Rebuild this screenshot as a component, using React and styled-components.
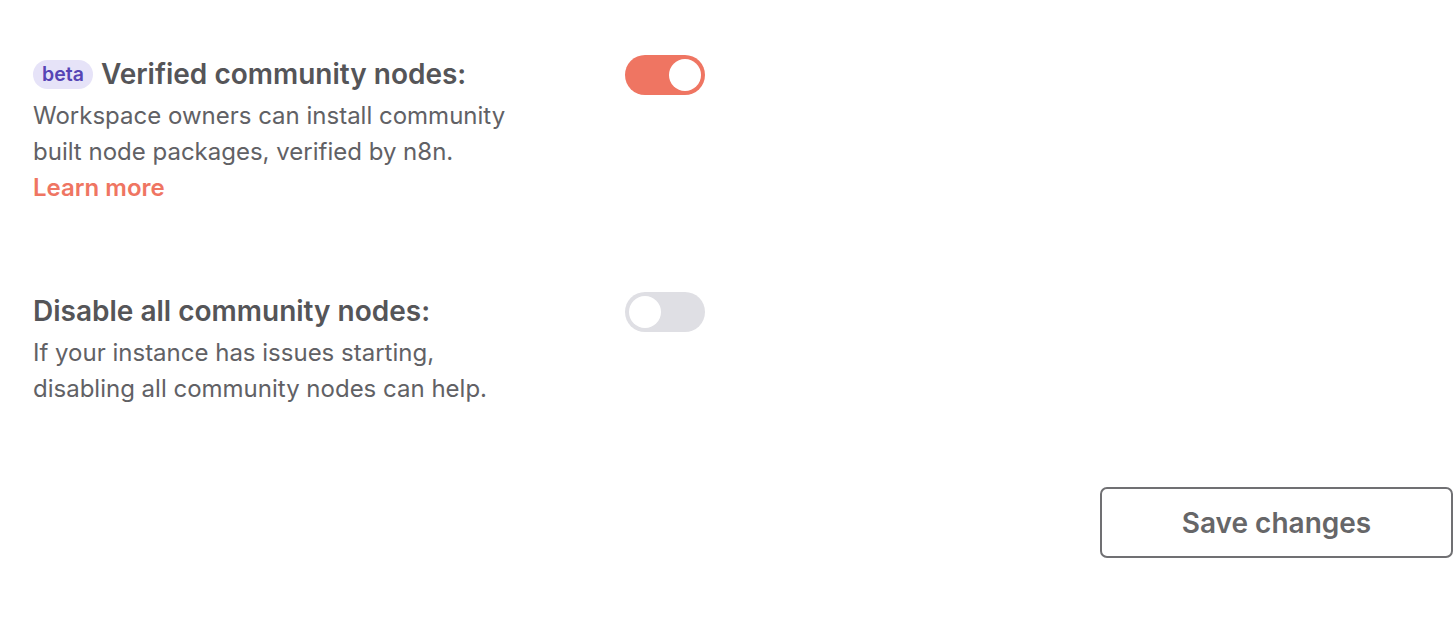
import React, { useState } from 'react';
import styled, { createGlobalStyle } from 'styled-components';

const GlobalStyle = createGlobalStyle`
  body {
    margin: 0;
    background: #ffffff;
    font-family: Inter, "Noto Sans", sans-serif;
  }
`;

const Page = styled.div`
  display: flex;
  flex-direction: column;
  padding: 54px 3px 0 33px;
`;

const SettingRow = styled.div`
  display: flex;
  align-items: flex-start;
  margin-bottom: ${props => props.spacing || 0}px;
`;

const TextColumn = styled.div`
  width: 592px;
  display: flex;
  flex-direction: column;
`;

const Title = styled.div`
  display: flex;
  align-items: center;
  gap: 8px;
  font-size: 28px;
  line-height: 40px;
  font-weight: 600;
  color: #555558;
  margin-bottom: 4px;
`;

const Badge = styled.span`
  display: inline-flex;
  align-items: center;
  height: 29px;
  padding: 0 9px;
  border-radius: 15px;
  background: #e6e3f8;
  color: #5645b5;
  font-size: 19.5px;
  font-weight: 600;
`;

const Description = styled.div`
  font-size: 24px;
  line-height: 36px;
  color: #616165;
`;

const LearnMore = styled.a`
  display: block;
  font-size: 24px;
  line-height: 36px;
  font-weight: 600;
  color: #ef7562;
  text-decoration: none;
  cursor: pointer;
`;

const Track = styled.button`
  width: 80px;
  height: 40px;
  margin-top: 1px;
  border: none;
  border-radius: 20px;
  padding: 4px;
  display: flex;
  justify-content: ${props => props.on ? 'flex-end' : 'flex-start'};
  background: ${props => props.on ? '#ef7562' : '#dfdfe4'};
  cursor: pointer;
`;

const Knob = styled.span`
  width: 32px;
  height: 32px;
  border-radius: 50%;
  background: #ffffff;
`;

const Footer = styled.div`
  display: flex;
  justify-content: flex-end;
`;

const SaveButton = styled.button`
  width: 353px;
  height: 71px;
  border: 2px solid #707073;
  border-radius: 7px;
  background: #ffffff;
  font-family: Inter, "Noto Sans", sans-serif;
  font-size: 28px;
  font-weight: 600;
  color: #666668;
  cursor: pointer;
`;

const Toggle = ({ on, onClick }) => (
  <Track on={on ? 1 : 0} onClick={onClick}>
    <Knob />
  </Track>
);

const App = () => {
  const [verified, setVerified] = useState(true);
  const [disabled, setDisabled] = useState(false);

  return (
    <>
      <GlobalStyle />
      <Page>
        <SettingRow spacing={85}>
          <TextColumn>
            <Title>
              <Badge>beta</Badge>
              Verified community nodes:
            </Title>
            <Description>
              Workspace owners can install community
              <br />
              built node packages, verified by n8n.
            </Description>
            <LearnMore>Learn more</LearnMore>
          </TextColumn>
          <Toggle on={verified} onClick={() => setVerified(!verified)} />
        </SettingRow>
        <SettingRow spacing={80}>
          <TextColumn>
            <Title>Disable all community nodes:</Title>
            <Description>
              If your instance has issues starting,
              <br />
              disabling all community nodes can help.
            </Description>
          </TextColumn>
          <Toggle on={disabled} onClick={() => setDisabled(!disabled)} />
        </SettingRow>
        <Footer>
          <SaveButton>Save changes</SaveButton>
        </Footer>
      </Page>
    </>
  );
};

export default App;
